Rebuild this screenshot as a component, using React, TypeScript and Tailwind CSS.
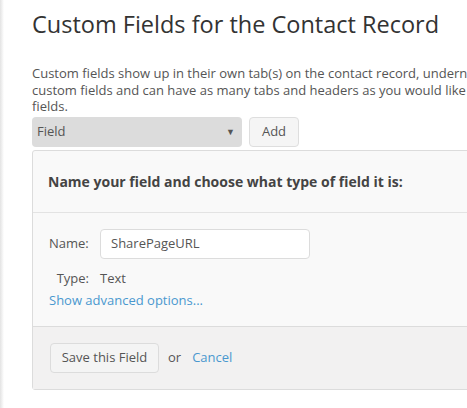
import React from "react";

export default function App() {
  const font = { fontFamily: '"Open Sans", "Liberation Sans", sans-serif' };
  return (
    <div className="w-[467px] h-[408px] overflow-hidden bg-white relative" style={font}>
      <div className="absolute left-0 top-0 h-full w-[4px] bg-gradient-to-r from-[#e3e3e3] to-white" />
      <div className="w-[760px] pl-[32px]">
        <h1 className="text-[23.5px] leading-[30px] text-[#333] pt-[9px] font-normal">
          Custom Fields for the Contact Record
        </h1>
        <p className="mt-[26px] text-[13px] leading-[16.5px] text-[#555] whitespace-nowrap">
          Custom fields show up in their own tab(s) on the contact record, underneath the standard fields. You can add up to 100
          <br />
          custom fields and can have as many tabs and headers as you would like to organize your
          <br />
          fields.
        </p>
        <div className="flex items-center gap-[7px] mt-[2px]">
          <div className="w-[210px] h-[30px] rounded-[4px] bg-[#dcdcdc] flex items-center justify-between pl-[5px] pr-[7px] text-[13px] text-[#555]">
            <span>Field</span>
            <span className="text-[9px] text-[#555]">▼</span>
          </div>
          <div className="w-[50px] h-[30px] rounded-[4px] bg-[#f5f5f5] border border-[#dedede] flex items-center justify-center text-[13px] text-[#555]">
            Add
          </div>
        </div>
        <div className="mt-[3px] border border-[#dcdcdc] rounded-[3px] bg-[#f9f9f9]">
          <div className="h-[62px] flex items-center pl-[15px] border-b border-[#e3e3e3]">
            <span className="text-[14px] font-bold text-[#444]">
              Name your field and choose what type of field it is:
            </span>
          </div>
          <div className="h-[113px] pt-[16px] pl-[16px]">
            <div className="flex items-center">
              <span className="w-[51px] text-[13px] text-[#555]">Name:</span>
              <div className="w-[210px] h-[30px] rounded-[4px] bg-white border border-[#dcdcdc] flex items-center pl-[10px] text-[13px] text-[#555]">
                SharePageURL
              </div>
            </div>
            <div className="flex items-center mt-[10px] h-[20px]">
              <span className="w-[51px] text-right pr-[11px] text-[13px] text-[#555]">Type:</span>
              <span className="text-[13px] text-[#555]">Text</span>
            </div>
            <div className="mt-[2px] text-[13px] text-[#4a98cf]">Show advanced options...</div>
          </div>
          <div className="h-[63px] bg-[#f2f1f1] border-t border-[#dcdcdc] flex items-center pl-[17px]">
            <div className="h-[30px] w-[109px] rounded-[4px] bg-[#f4f4f4] border border-[#dcdcdc] flex items-center justify-center text-[13px] text-[#555]">
              Save this Field
            </div>
            <span className="ml-[9px] text-[13px] text-[#555]">or</span>
            <span className="ml-[11px] text-[13px] text-[#4a98cf]">Cancel</span>
          </div>
        </div>
      </div>
    </div>
  );
}
